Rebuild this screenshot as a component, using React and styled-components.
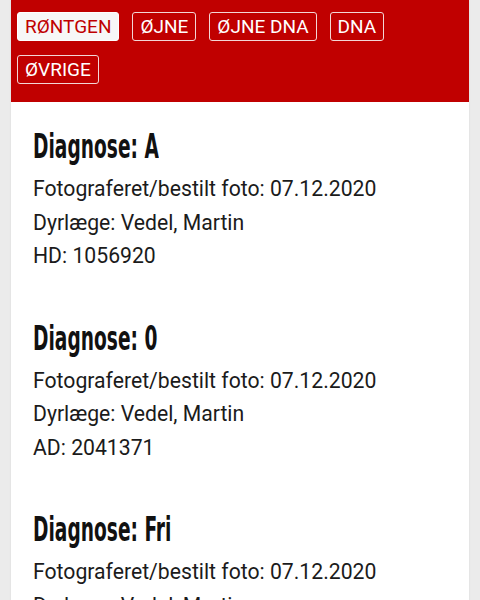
import styled, { createGlobalStyle } from 'styled-components';

const GlobalStyle = createGlobalStyle`
    body {
        margin: 0;
        background: #ebebeb;
        font-family: Roboto, "Liberation Sans", sans-serif;
    }
`;

const tabs = ['RØNTGEN', 'ØJNE', 'ØJNE DNA', 'DNA', 'ØVRIGE'];

const results = [
    { diagnose: 'A', foto: '07.12.2020', vet: 'Vedel, Martin', code: 'HD', number: '1056920' },
    { diagnose: '0', foto: '07.12.2020', vet: 'Vedel, Martin', code: 'AD', number: '2041371' },
    { diagnose: 'Fri', foto: '07.12.2020', vet: 'Vedel, Martin', code: 'ED', number: '1056921' },
];

export default function App() {
    return (
        <>
            <GlobalStyle />
            <Page>
                <TabBar>
                    {tabs.map((tab, i) => (
                        <Tab key={tab} active={i === 0}>{tab}</Tab>
                    ))}
                </TabBar>
                <Content>
                    {results.map((r, i) => (
                        <Result key={i}>
                            <Heading><span>Diagnose: {r.diagnose}</span></Heading>
                            <Line>Fotograferet/bestilt foto: {r.foto}</Line>
                            <Line>Dyrlæge: {r.vet}</Line>
                            <Line>{r.code}: {r.number}</Line>
                        </Result>
                    ))}
                </Content>
            </Page>
        </>
    );
}

const Page = styled.main`
    margin: 0 11px;
    min-height: 100vh;
    background: #fff;
    box-shadow: 0 0 2px rgba(0, 0, 0, 0.08);
`;

const TabBar = styled.nav`
    display: flex;
    flex-wrap: wrap;
    gap: 14px 13px;
    padding: 12px 6px 18px;
    background: #c00000;
`;

const Tab = styled.button.withConfig({ shouldForwardProp: p => p !== 'active' })`
    height: 29px;
    padding: 0 7px;
    border: 1px solid ${p => (p.active ? '#fff' : '#f3d6d6')};
    border-radius: 3px;
    background: ${p => (p.active ? '#f7f7f7' : 'transparent')};
    color: ${p => (p.active ? '#c00000' : '#fff')};
    font-family: Roboto, "Liberation Sans", sans-serif;
    font-size: 19px;
    line-height: 27px;
    cursor: pointer;
`;

const Content = styled.section`
    padding: 24px 22px 0;
`;

const Result = styled.article`
    margin-bottom: 45px;
`;

const Heading = styled.h2`
    margin: 0 0 6px;
    font-family: "DejaVu Sans Condensed", "DejaVu Sans", sans-serif;
    font-weight: 700;
    font-size: 34.5px;
    line-height: 40px;
    color: #111;
    white-space: nowrap;

    span {
        display: inline-block;
        transform: scaleX(0.6);
        transform-origin: left center;
    }
`;

const Line = styled.p`
    margin: 0;
    font-size: 21.2px;
    line-height: 33.5px;
    color: #1b1b1b;
`;
